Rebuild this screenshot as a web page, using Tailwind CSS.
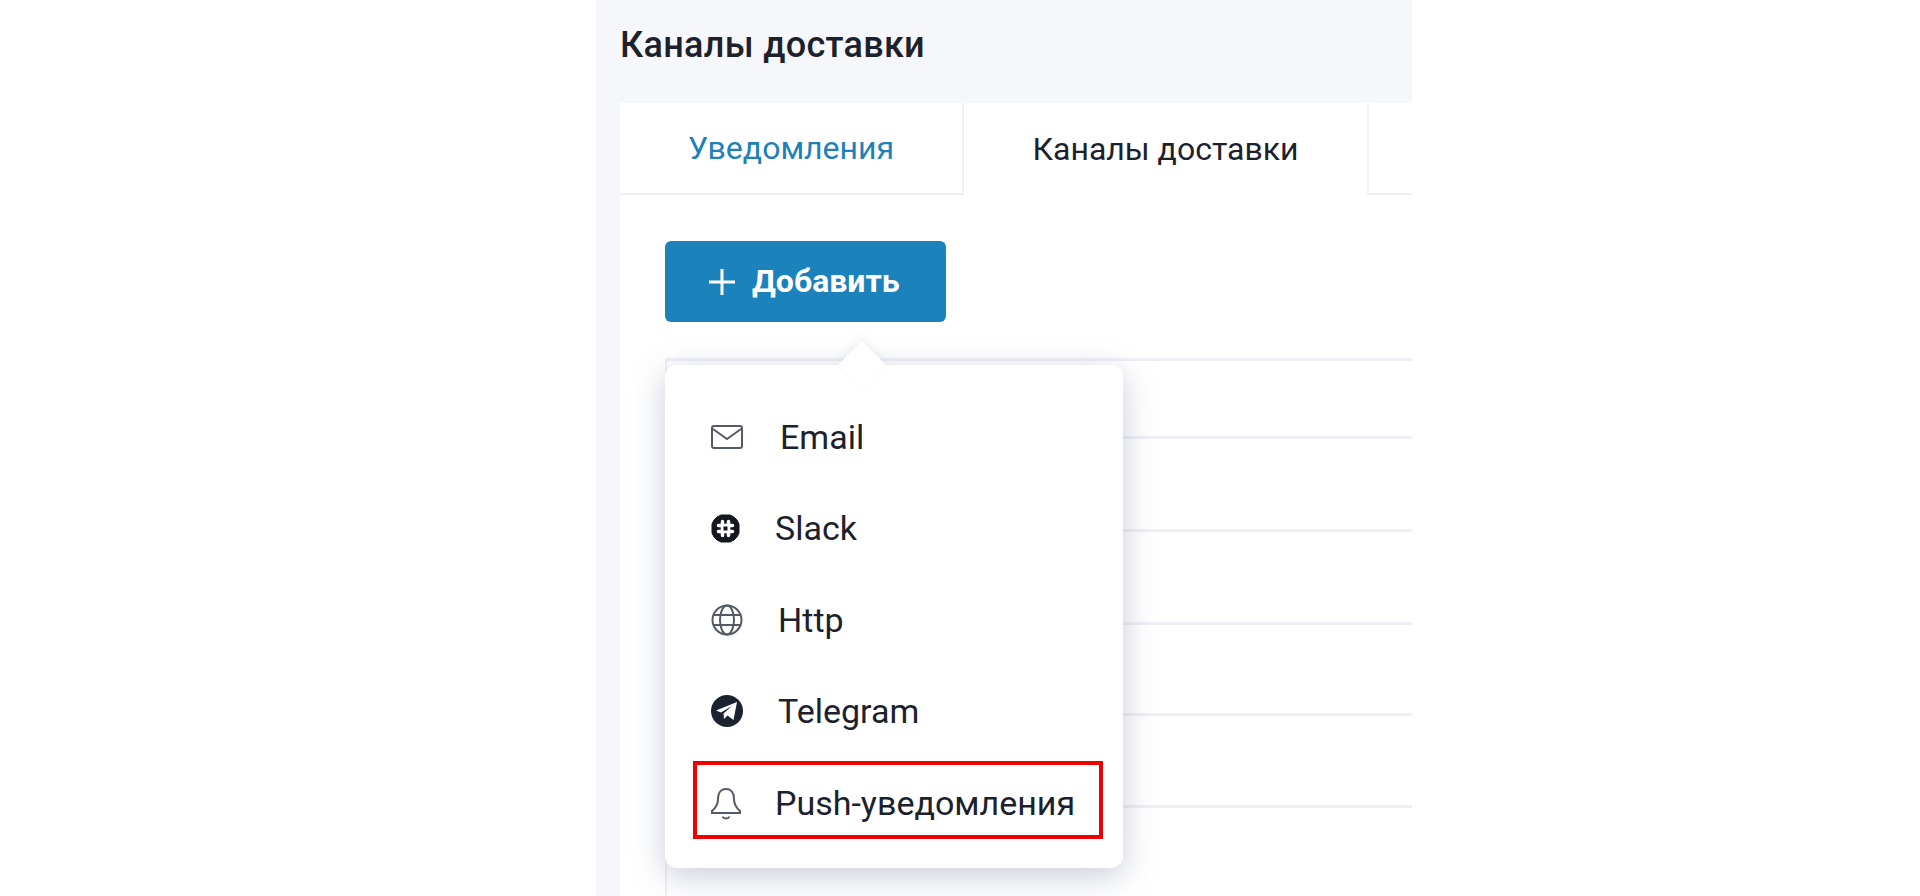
<!DOCTYPE html>
<html lang="ru">
<head>
    <meta charset="UTF-8">
    <title>Каналы доставки</title>
    <script src="https://cdn.jsdelivr.net/npm/@tailwindcss/browser@4"></script>
</head>
<body class="bg-white h-[896px] overflow-hidden font-['Roboto',sans-serif] text-[#1c212b]">
    <div class="ml-[596px] w-[816px] h-[896px] bg-[#f6f7fb] pl-[24px]">
        <h1 class="h-[103px] flex items-center text-[36px] font-medium tracking-[0.3px] pb-[13px]">Каналы доставки</h1>

        <!-- tabs -->
        <div class="flex h-[92px] text-[32px]">
            <div class="w-[342px] bg-white border-b-2 border-[#eef0f5] flex items-center justify-center text-[#2080b8]">Уведомления</div>
            <div class="w-[407px] bg-white border-x-2 border-[#eef0f5] flex items-center justify-center">Каналы доставки</div>
            <div class="flex-1 bg-white border-b-2 border-[#eef0f5]"></div>
        </div>

        <!-- content -->
        <div class="relative h-[701px] bg-white pl-[45px] pt-[46px]">
            <button class="w-[281px] h-[81px] bg-[#1b82bc] rounded-[6px] text-white flex items-center pl-[44px] gap-[17px] text-[32px] font-bold">
                <svg class="w-[26px] h-[26px]" viewBox="0 0 26 26" fill="none" stroke="white" stroke-width="3"><path d="M13 0v26M0 13h26"/></svg>
                <span class="pb-[2px]">Добавить</span>
            </button>

            <!-- table rows behind the menu -->
            <div class="mt-[36px] border-l-2 border-[#eef0f5] h-[538px]">
                <div class="h-[78px] border-t-[3px] border-[#eef0f5]"></div>
                <div class="h-[93px] border-t-[3px] border-[#eef0f5]"></div>
                <div class="h-[93px] border-t-[3px] border-[#eef0f5]"></div>
                <div class="h-[91px] border-t-[3px] border-[#eef0f5]"></div>
                <div class="h-[92px] border-t-[3px] border-[#eef0f5]"></div>
                <div class="h-[91px] border-t-[3px] border-[#eef0f5]"></div>
            </div>

            <!-- dropdown -->
            <div class="absolute left-[45px] top-[170px] w-[458px] h-[503px] bg-white rounded-[12px] shadow-[0_8px_32px_rgba(120,130,160,0.4)] pt-[26px] pl-[46px] text-[34px]">
                <div class="absolute left-[180px] top-[-17px] w-[34px] h-[34px] bg-white rotate-45 shadow-[-3px_-3px_8px_rgba(120,130,160,0.1)]"></div>
                <div class="relative h-[92px] flex items-center">
                    <svg class="w-[32px] h-[24px] mr-[37px]" viewBox="0 0 32 24" fill="none" stroke="#555b66" stroke-width="2"><rect x="1" y="1" width="30" height="22" rx="2"/><path d="M2 4l14 10L30 4"/></svg>
                    <span>Email</span>
                </div>
                <div class="relative h-[91px] flex items-center">
                    <svg class="w-[29px] h-[29px] mr-[35px]" viewBox="0 0 29 29"><path d="M10 1h9l4 2 3 3 2 4v9l-2 4-3 3-4 2h-9l-4-2-3-3-2-4v-9l2-4 3-3z" fill="#14171f" stroke="#14171f" stroke-linejoin="round" stroke-width="1"/><path d="M11.500 7.500v14M17.500 7.500v14M7.500 11.500h14M7.500 17.500h14" stroke="white" stroke-width="3.500" stroke-linecap="round"/><rect x="12.500" y="12.500" width="4" height="4" fill="#14171f"/></svg>
                    <span>Slack</span>
                </div>
                <div class="relative h-[92px] flex items-center">
                    <svg class="w-[32px] h-[32px] mr-[35px]" viewBox="0 0 32 32" fill="none" stroke="#555b66" stroke-width="2"><circle cx="16" cy="16" r="14.5"/><ellipse cx="16" cy="16" rx="7" ry="14.5"/><path d="M3 11h26M3 21h26"/></svg>
                    <span>Http</span>
                </div>
                <div class="relative h-[90px] flex items-center">
                    <svg class="w-[32px] h-[32px] mr-[35px]" viewBox="0 0 32 32"><circle cx="16" cy="16" r="16" fill="#1b2230"/><path d="M5 15.500 26 7 22.500 25 16.500 20.500 13 24 12.500 18.500 21 11 10 17.500z" fill="white"/></svg>
                    <span>Telegram</span>
                </div>
                <div class="relative h-[94px] flex items-center">
                    <svg class="w-[30px] h-[33px] mr-[34px]" viewBox="0 0 30 33" fill="none" stroke="#555b66" stroke-width="2"><path d="M15 2c-5.500 0-8 4.500-8 10 0 6-2.500 9-6 12v2h28v-2c-3.500-3-6-6-6-12 0-5.500-2.500-10-8-10z"/><path d="M11.500 29.500c1 2.500 6 2.500 7 0"/></svg>
                    <span>Push-уведомления</span>
                    <div class="absolute left-[-18px] right-[20px] top-[5px] h-[78px] border-[4px] border-[#f00000]"></div>
                </div>
            </div>
        </div>
    </div>
</body>
</html>
